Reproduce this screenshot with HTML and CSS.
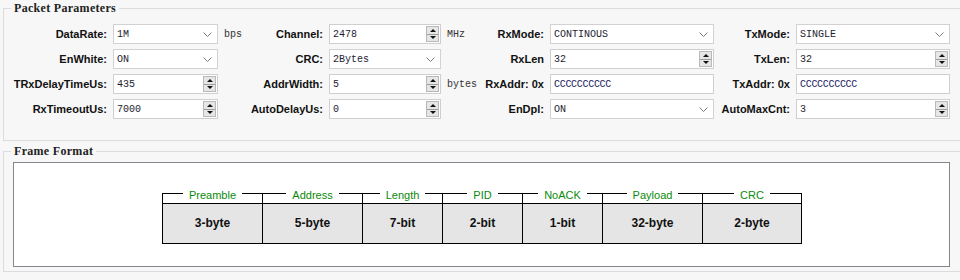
FILE: index.html
```html
<!DOCTYPE html>
<html lang="en">
<head>
    <meta charset="UTF-8">
    <title>Packet Parameters</title>
    <link rel="stylesheet" href="styles.css">
</head>
<body>
    <!-- Packet parameters -->
    <fieldset class="group params">
        <legend>Packet Parameters</legend>
        <div class="param-grid">
            <!-- row 1 -->
            <label>DataRate:</label>
            <div class="field combo"><span>1M</span><svg width="9" height="5" viewBox="0 0 9 5"><polyline points="0.5,0.5 4.5,4.5 8.5,0.5" fill="none" stroke="#7a7a7a"/></svg></div>
            <span class="unit">bps</span>
            <label>Channel:</label>
            <div class="field spin"><span>2478</span><div class="spin-btn"><i class="up"></i><i class="down"></i></div></div>
            <span class="unit">MHz</span>
            <label>RxMode:</label>
            <div class="field combo"><span>CONTINOUS</span><svg width="9" height="5" viewBox="0 0 9 5"><polyline points="0.5,0.5 4.5,4.5 8.5,0.5" fill="none" stroke="#7a7a7a"/></svg></div>
            <label>TxMode:</label>
            <div class="field combo"><span>SINGLE</span><svg width="9" height="5" viewBox="0 0 9 5"><polyline points="0.5,0.5 4.5,4.5 8.5,0.5" fill="none" stroke="#7a7a7a"/></svg></div>

            <!-- row 2 -->
            <label>EnWhite:</label>
            <div class="field combo"><span>ON</span><svg width="9" height="5" viewBox="0 0 9 5"><polyline points="0.5,0.5 4.5,4.5 8.5,0.5" fill="none" stroke="#7a7a7a"/></svg></div>
            <span class="unit"></span>
            <label>CRC:</label>
            <div class="field combo"><span>2Bytes</span><svg width="9" height="5" viewBox="0 0 9 5"><polyline points="0.5,0.5 4.5,4.5 8.5,0.5" fill="none" stroke="#7a7a7a"/></svg></div>
            <span class="unit"></span>
            <label>RxLen</label>
            <div class="field spin"><span>32</span><div class="spin-btn"><i class="up"></i><i class="down"></i></div></div>
            <label>TxLen:</label>
            <div class="field spin"><span>32</span><div class="spin-btn"><i class="up"></i><i class="down"></i></div></div>

            <!-- row 3 -->
            <label>TRxDelayTimeUs:</label>
            <div class="field spin"><span>435</span><div class="spin-btn"><i class="up"></i><i class="down"></i></div></div>
            <span class="unit"></span>
            <label>AddrWidth:</label>
            <div class="field spin"><span>5</span><div class="spin-btn"><i class="up"></i><i class="down"></i></div></div>
            <span class="unit">bytes</span>
            <label>RxAddr: 0x</label>
            <div class="field"><span class="addr">CCCCCCCCCC</span></div>
            <label>TxAddr: 0x</label>
            <div class="field"><span class="addr">CCCCCCCCCC</span></div>

            <!-- row 4 -->
            <label>RxTimeoutUs:</label>
            <div class="field spin"><span>7000</span><div class="spin-btn"><i class="up"></i><i class="down"></i></div></div>
            <span class="unit"></span>
            <label>AutoDelayUs:</label>
            <div class="field spin"><span>0</span><div class="spin-btn"><i class="up"></i><i class="down"></i></div></div>
            <span class="unit"></span>
            <label>EnDpl:</label>
            <div class="field combo"><span>ON</span><svg width="9" height="5" viewBox="0 0 9 5"><polyline points="0.5,0.5 4.5,4.5 8.5,0.5" fill="none" stroke="#7a7a7a"/></svg></div>
            <label>AutoMaxCnt:</label>
            <div class="field spin"><span>3</span><div class="spin-btn"><i class="up"></i><i class="down"></i></div></div>
        </div>
    </fieldset>

    <!-- Frame format -->
    <fieldset class="group frame">
        <legend>Frame Format</legend>
        <div class="frame-box">
            <div class="frame-table">
                <div class="hd"><span>Preamble</span></div>
                <div class="hd"><span>Address</span></div>
                <div class="hd"><span>Length</span></div>
                <div class="hd"><span>PID</span></div>
                <div class="hd"><span>NoACK</span></div>
                <div class="hd"><span>Payload</span></div>
                <div class="hd"><span>CRC</span></div>

                <div class="cell">3-byte</div>
                <div class="cell">5-byte</div>
                <div class="cell">7-bit</div>
                <div class="cell">2-bit</div>
                <div class="cell">1-bit</div>
                <div class="cell">32-byte</div>
                <div class="cell">2-byte</div>
            </div>
        </div>
    </fieldset>
</body>
</html>
```

FILE: styles.css
```css
/* General */
* {
    margin: 0;
    padding: 0;
    box-sizing: border-box;
}

body {
    background-color: #f7f7f7;
    font-family: 'Liberation Sans', Arial, sans-serif;
    color: #111;
    width: 960px;
    height: 280px;
    overflow: hidden;
}

/* Group boxes */
.group {
    border: 1px solid #dcdcdc;
    margin-left: 3px;
    margin-right: -20px;
    min-width: 0;
}

.group legend {
    font-family: 'Liberation Serif', 'Times New Roman', serif;
    font-weight: bold;
    font-size: 12px;
    line-height: 12px;
    letter-spacing: 0.3px;
    color: #222;
    padding: 0 3px;
}

.params {
    margin-top: 2px;
    padding: 10px 0 21px 4px;
}

.params legend {
    margin-left: 3px;
}

.frame {
    margin-top: 4px;
    padding: 5px 0 4px 9px;
}

.frame legend {
    margin-left: -2px;
}

/* Parameter grid */
.param-grid {
    display: grid;
    grid-template-columns: 105px 105px 29px 82px 112px 40px 69px 164px 82px 154px;
    grid-auto-rows: 20px;
    row-gap: 5px;
    align-items: center;
}

.param-grid label {
    font-weight: bold;
    font-size: 11px;
    text-align: right;
    padding-right: 6px;
    white-space: nowrap;
}

.unit {
    font-family: 'Liberation Mono', 'Courier New', monospace;
    font-size: 10px;
    color: #333;
    padding-left: 6px;
    white-space: nowrap;
}

.field {
    height: 20px;
    background: #fff;
    border: 1px solid #cfcfcf;
    display: flex;
    align-items: center;
    font-family: 'Liberation Mono', 'Courier New', monospace;
    font-size: 10px;
    color: #1c1c30;
    padding-left: 3px;
}

.field span {
    flex: 1;
}

.field .addr {
    color: #1a1a60;
    letter-spacing: -0.3px;
}

.combo {
    border-color: #d2d2d2;
    padding-right: 5px;
}

/* Spin box buttons */
.spin {
    padding-right: 1px;
}

.spin-btn {
    width: 13px;
    height: 16px;
    background: #e6e6e6;
    border: 1px solid #b9b9b9;
    display: flex;
    flex-direction: column;
}

.spin-btn i {
    flex: 1;
    display: flex;
    align-items: center;
    justify-content: center;
}

.spin-btn i.up {
    border-bottom: 1px solid #9c9c9c;
}

.spin-btn i.up::after {
    content: '';
    border-left: 3px solid transparent;
    border-right: 3px solid transparent;
    border-bottom: 3px solid #111;
}

.spin-btn i.down::after {
    content: '';
    border-left: 3px solid transparent;
    border-right: 3px solid transparent;
    border-top: 3px solid #111;
}

/* Frame format diagram */
.frame-box {
    width: 937px;
    height: 105px;
    background: #fff;
    border: 1px solid #85858d;
    display: flex;
    justify-content: center;
    align-items: center;
    padding-top: 7px;
}

.frame-table {
    display: grid;
    grid-template-columns: 100px 100px 80px 80px 80px 100px 100px;
    margin-left: 1px;
}

.hd {
    height: 10px;
    border-top: 1px solid #000;
    border-left: 1px solid #000;
    text-align: center;
}

.hd:nth-child(7) {
    border-right: 1px solid #000;
}

.hd span {
    position: relative;
    top: -9px;
    background: #fff;
    padding: 0 6px;
    font-size: 11px;
    line-height: 14px;
    color: #0b8a0b;
}

.cell {
    height: 41px;
    background: #e5e5e5;
    border-top: 1px solid #000;
    border-left: 1px solid #000;
    border-bottom: 1px solid #000;
    display: flex;
    align-items: center;
    justify-content: center;
    font-weight: bold;
    font-size: 12px;
    color: #111;
}

.cell:nth-child(14) {
    border-right: 1px solid #000;
}
```
